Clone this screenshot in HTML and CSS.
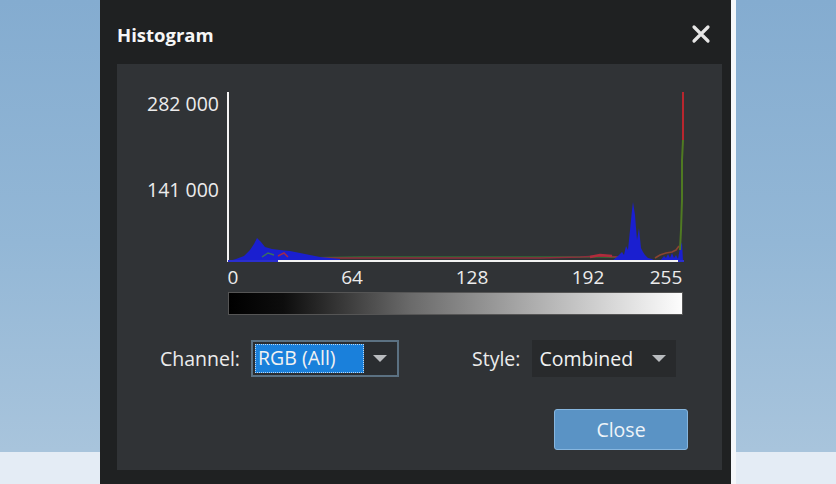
FILE: index.html
```html
<!DOCTYPE html>
<html>
<head>
<meta charset="utf-8">
<link rel="stylesheet" href="styles.css">
</head>
<body>
<div class="desktop">
  <div class="side left"></div>
  <div class="dialog">
    <div class="titlebar">
      <span class="title">Histogram</span>
      <svg class="close-x" width="20" height="20" viewBox="0 0 20 20"><path d="M3 3L17 17M17 3L3 17" stroke="#e6e6e6" stroke-width="3.2" stroke-linecap="round"/></svg>
    </div>
    <div class="panel">
      <div class="chart">
        <div class="ylabels">
          <span class="ytick" style="top:14px">282 000</span>
          <span class="ytick" style="top:100px">141 000</span>
        </div>
        <svg class="plot" width="457" height="174" viewBox="227 90 457 174">
          <!-- red/green low traces -->
          <polyline fill="none" stroke="#2f6e35" stroke-width="1.6" points="300,258 360,257 420,257 470,257 520,257 600,257 640,258"/>
          <polyline fill="none" stroke="#8e2d3e" stroke-width="1.6" points="300,258 340,258 380,258 420,258 460,258 500,258 540,258 580,257 600,256 620,257 640,258"/>
          <polyline fill="none" stroke="#b02c3c" stroke-width="2.5" points="590,257 600,255 612,256"/>
          <!-- left blue hump -->
          <polygon fill="#1a1fd0" points="229,261 236,259 244,256 250,250 254,244 257,238 261,242 265,247 272,249 280,250 290,251 300,253 310,255 320,257 330,258 340,259 340,261"/>
          <polyline fill="none" stroke="#3a7060" stroke-width="1.5" points="262,257 268,253 274,255"/>
          <polyline fill="none" stroke="#a02a4a" stroke-width="1.5" points="278,256 284,253 288,257"/>
          <!-- right blue spike -->
          <polygon fill="#1a1fd0" points="612,261 618,256 622,252 624,255 626,246 628,250 630,230 632,210 633,202 635,215 637,240 639,228 641,248 643,252 645,255 648,258 652,259 655,261"/>
          <!-- right end red/green and blue -->
          <polyline fill="none" stroke="#8a4430" stroke-width="1.6" points="655,258 660,255 666,253 672,252 676,250 679,246"/>
          <polygon fill="#1a1fd0" points="660,261 664,256 666,258 668,254 670,258 672,253 674,258 676,255 678,259 680,248 682,242 683,261"/>
          <polyline fill="none" stroke="#4f7a22" stroke-width="2" points="680,250 681,230 682,200 682,160 683,140"/>
          <polyline fill="none" stroke="#b8262e" stroke-width="2" points="683,140 683,118 683,92"/>
          <!-- axes -->
          <line x1="228" y1="92" x2="228" y2="262" stroke="#f4f4f4" stroke-width="2"/>
          <line x1="228" y1="261" x2="684" y2="261" stroke="#2b2fd0" stroke-width="2"/>
          <line x1="278" y1="261" x2="678" y2="261" stroke="#f2f2f2" stroke-width="2"/>
        </svg>
      </div>
      <div class="xaxis">
        <span class="xtick" style="left:116px">0</span>
        <span class="xtick" style="left:235px">64</span>
        <span class="xtick" style="left:355px">128</span>
        <span class="xtick" style="left:471px">192</span>
        <span class="xtick" style="left:549px">255</span>
      </div>
      <div class="gradbar"></div>
      <div class="controls">
        <div class="field">
          <span class="label">Channel:</span>
          <div class="select focus">
            <span class="value selected">RGB (All)</span>
            <span class="arrow"></span>
          </div>
        </div>
        <div class="field">
          <span class="label">Style:</span>
          <div class="select plain">
            <span class="value">Combined</span>
            <span class="arrow"></span>
          </div>
        </div>
      </div>
      <div class="buttons">
        <button class="btn">Close</button>
      </div>
    </div>
  </div>
  <div class="edge"></div>
  <div class="side right"></div>
</div>
</body>
</html>
```

FILE: styles.css
```css
* { box-sizing: border-box; }
html, body { margin: 0; padding: 0; }
body {
  width: 836px;
  height: 484px;
  overflow: hidden;
  font-family: "Open Sans", "Noto Sans", sans-serif;
}
.desktop {
  display: flex;
  width: 836px;
  height: 484px;
}
.side {
  background:
    linear-gradient(to bottom, transparent 0, transparent 452px, #e4ecf5 452px),
    linear-gradient(to bottom, #84acd0 0%, #93b7d6 50%, #a8c4dc 93%);
}
.side.left { width: 100px; }
.side.right { flex: 1; }
.edge {
  width: 5px;
  background: #f4f7fa;
}
.dialog {
  width: 631px;
  background: #1f2122;
  display: flex;
  flex-direction: column;
}
.titlebar {
  height: 64px;
  display: flex;
  align-items: center;
  justify-content: space-between;
  padding: 6px 20px 0 17px;
}
.title {
  color: #f6f6f6;
  font-family: "Open Sans", sans-serif;
  font-weight: 700;
  font-size: 18.5px;
  letter-spacing: 0;
  margin-top: -1px;
}
.close-x { margin-top: -2px; }
.panel {
  margin: 0 9px 14px 17px;
  height: 406px;
  background: #303336;
  padding-top: 26px;
  display: flex;
  flex-direction: column;
}
.chart {
  position: relative;
  display: flex;
  height: 174px;
}
.ylabels {
  position: relative;
  width: 110px;
}
.ytick {
  position: absolute;
  right: 8px;
  transform: translateY(-50%);
  color: #ececec;
  font-size: 19.5px;
  line-height: 1;
  white-space: nowrap;
}
.plot { display: block; }
.xaxis {
  position: relative;
  height: 30px;
  margin-top: -2px;
}
.xtick {
  position: absolute;
  top: 6px;
  transform: translateX(-50%);
  color: #ececec;
  font-size: 19px;
  line-height: 1;
}
.gradbar {
  margin-left: 111px;
  width: 455px;
  height: 23px;
  background: linear-gradient(to right, #000 0%, #0d0d0d 12%, #6a6a6a 40%, #a8a8a8 65%, #fdfdfd 100%);
  border: 1px solid #555;
}
.controls {
  display: flex;
  align-items: center;
  margin-top: 25px;
  padding-left: 43px;
  gap: 73px;
}
.field {
  display: flex;
  align-items: center;
  gap: 11px;
}
.label {
  color: #ececec;
  font-size: 19.5px;
}
.field + .field { gap: 12px; }
.select {
  height: 37px;
  display: flex;
  align-items: center;
  justify-content: space-between;
}
.select.focus {
  width: 148px;
  border: 2px solid #5b7182;
  padding: 2px 10px 2px 2px;
  background: #2a2d30;
}
.select.plain {
  width: 144px;
  background: #282a2c;
  padding: 0 10px 0 7px;
}
.value {
  color: #f2f2f2;
  font-size: 19.5px;
  white-space: nowrap;
}
.value.selected {
  background: #1a80db;
  width: 109px;
  height: 29px;
  line-height: 27px;
  padding-left: 3px;
  outline: 1px dotted #bcd8f2;
  outline-offset: -1px;
}
.arrow {
  width: 0;
  height: 0;
  border-left: 7px solid transparent;
  border-right: 7px solid transparent;
  border-top: 7px solid #b9bcbf;
}
.buttons {
  display: flex;
  justify-content: flex-end;
  margin-top: 32px;
  padding-right: 34px;
}
.btn {
  width: 134px;
  height: 41px;
  background: #5a93c5;
  border: 1px solid #86b6df;
  border-radius: 3px;
  color: #eef3f8;
  font-family: "Open Sans", sans-serif;
  font-size: 19.5px;
}
```
